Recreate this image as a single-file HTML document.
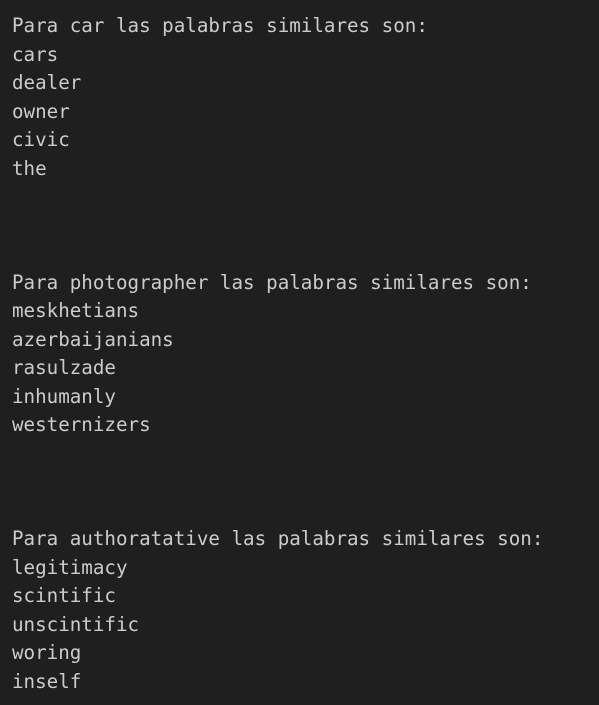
<!DOCTYPE html>
<html><head><meta charset="utf-8"><style>
html,body{margin:0;padding:0;background:#1f1f1f;width:599px;height:705px;overflow:hidden}
pre{margin:0;padding:12px 0 0 12px;font-family:"DejaVu Sans Mono","Liberation Mono",monospace;font-size:19.2px;line-height:28.5px;color:#cccccc}
</style></head><body><pre>Para car las palabras similares son:
cars
dealer
owner
civic
the



Para photographer las palabras similares son:
meskhetians
azerbaijanians
rasulzade
inhumanly
westernizers



Para authoratative las palabras similares son:
legitimacy
scintific
unscintific
woring
inself</pre></body></html>
